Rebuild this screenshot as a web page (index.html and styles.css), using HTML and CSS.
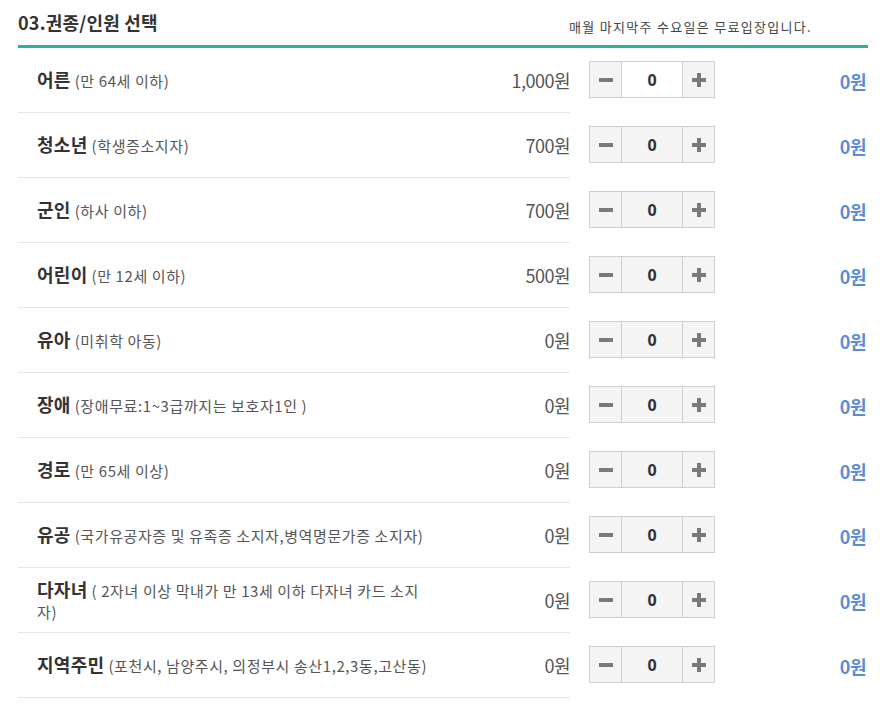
FILE: index.html
```html
<!DOCTYPE html>
<html>
<head>
    <meta charset="UTF-8">
    <title>권종/인원 선택</title>
    <link rel="stylesheet" href="styles.css">
</head>
<body>
    <div class="ticket">
        <div class="ticket-head">
            <h3 class="ticket-title">03.권종/인원 선택</h3>
            <span class="ticket-note">매월 마지막주 수요일은 무료입장입니다.</span>
        </div>
        <ul class="ticket-list">
            <li class="ticket-row">
                <div class="ticket-info">
                    <div class="ticket-name"><strong>어른</strong> <span>(만 64세 이하)</span></div>
                    <div class="ticket-price">1,000원</div>
                </div>
                <div class="stepper">
                    <button class="step minus"></button>
                    <input class="step-num focus" type="text" value="0">
                    <button class="step plus"></button>
                </div>
                <div class="ticket-sum">0원</div>
            </li>
            <li class="ticket-row">
                <div class="ticket-info">
                    <div class="ticket-name"><strong>청소년</strong> <span>(학생증소지자)</span></div>
                    <div class="ticket-price">700원</div>
                </div>
                <div class="stepper">
                    <button class="step minus"></button>
                    <input class="step-num" type="text" value="0">
                    <button class="step plus"></button>
                </div>
                <div class="ticket-sum">0원</div>
            </li>
            <li class="ticket-row">
                <div class="ticket-info">
                    <div class="ticket-name"><strong>군인</strong> <span>(하사 이하)</span></div>
                    <div class="ticket-price">700원</div>
                </div>
                <div class="stepper">
                    <button class="step minus"></button>
                    <input class="step-num" type="text" value="0">
                    <button class="step plus"></button>
                </div>
                <div class="ticket-sum">0원</div>
            </li>
            <li class="ticket-row">
                <div class="ticket-info">
                    <div class="ticket-name"><strong>어린이</strong> <span>(만 12세 이하)</span></div>
                    <div class="ticket-price">500원</div>
                </div>
                <div class="stepper">
                    <button class="step minus"></button>
                    <input class="step-num" type="text" value="0">
                    <button class="step plus"></button>
                </div>
                <div class="ticket-sum">0원</div>
            </li>
            <li class="ticket-row">
                <div class="ticket-info">
                    <div class="ticket-name"><strong>유아</strong> <span>(미취학 아동)</span></div>
                    <div class="ticket-price">0원</div>
                </div>
                <div class="stepper">
                    <button class="step minus"></button>
                    <input class="step-num" type="text" value="0">
                    <button class="step plus"></button>
                </div>
                <div class="ticket-sum">0원</div>
            </li>
            <li class="ticket-row">
                <div class="ticket-info">
                    <div class="ticket-name"><strong>장애</strong> <span>(장애무료:1~3급까지는 보호자1인 )</span></div>
                    <div class="ticket-price">0원</div>
                </div>
                <div class="stepper">
                    <button class="step minus"></button>
                    <input class="step-num" type="text" value="0">
                    <button class="step plus"></button>
                </div>
                <div class="ticket-sum">0원</div>
            </li>
            <li class="ticket-row">
                <div class="ticket-info">
                    <div class="ticket-name"><strong>경로</strong> <span>(만 65세 이상)</span></div>
                    <div class="ticket-price">0원</div>
                </div>
                <div class="stepper">
                    <button class="step minus"></button>
                    <input class="step-num" type="text" value="0">
                    <button class="step plus"></button>
                </div>
                <div class="ticket-sum">0원</div>
            </li>
            <li class="ticket-row">
                <div class="ticket-info">
                    <div class="ticket-name"><strong>유공</strong> <span>(국가유공자증 및 유족증 소지자,병역명문가증 소지자)</span></div>
                    <div class="ticket-price">0원</div>
                </div>
                <div class="stepper">
                    <button class="step minus"></button>
                    <input class="step-num" type="text" value="0">
                    <button class="step plus"></button>
                </div>
                <div class="ticket-sum">0원</div>
            </li>
            <li class="ticket-row">
                <div class="ticket-info">
                    <div class="ticket-name"><strong>다자녀</strong> <span>( 2자녀 이상 막내가 만 13세 이하 다자녀 카드 소지자)</span></div>
                    <div class="ticket-price">0원</div>
                </div>
                <div class="stepper">
                    <button class="step minus"></button>
                    <input class="step-num" type="text" value="0">
                    <button class="step plus"></button>
                </div>
                <div class="ticket-sum">0원</div>
            </li>
            <li class="ticket-row">
                <div class="ticket-info">
                    <div class="ticket-name"><strong>지역주민</strong> <span>(포천시, 남양주시, 의정부시 송산1,2,3동,고산동)</span></div>
                    <div class="ticket-price">0원</div>
                </div>
                <div class="stepper">
                    <button class="step minus"></button>
                    <input class="step-num" type="text" value="0">
                    <button class="step plus"></button>
                </div>
                <div class="ticket-sum">0원</div>
            </li>
        </ul>
    </div>
</body>
</html>
```

FILE: styles.css
```css
body {
    margin: 0;
    padding: 0;
    background: #fff;
    color: #333;
    font-family: "Noto Sans CJK KR", "Noto Sans", sans-serif;
}
.ticket {
    width: 850px;
    margin-left: 18px;
}
.ticket-head {
    display: flex;
    align-items: flex-start;
    justify-content: space-between;
    height: 45px;
    border-bottom: 3px solid #2ab39b;
}
.ticket-title {
    margin: 10px 0 0;
    font-size: 18px;
    font-weight: 700;
    color: #333;
    line-height: 24px;
    letter-spacing: 0.2px;
}
.ticket-note {
    margin: 18px 56px 0 0;
    font-size: 13px;
    color: #444;
    line-height: 18px;
    letter-spacing: 1.3px;
}
.ticket-list {
    list-style: none;
    margin: 0;
    padding: 0;
}
.ticket-row {
    display: flex;
    align-items: center;
    height: 65px;
}
.ticket-info {
    display: flex;
    align-items: center;
    width: 552px;
    height: 65px;
    box-sizing: border-box;
    border-bottom: 1px solid #e6e6e6;
    padding-left: 19px;
}
.ticket-name {
    width: 400px;
    font-size: 15px;
    color: #555;
    line-height: 21px;
    letter-spacing: 0.6px;
}
.ticket-name strong {
    font-size: 18px;
    font-weight: 700;
    color: #333;
    letter-spacing: 0.3px;
}
.ticket-price {
    flex: 1;
    text-align: right;
    font-size: 18px;
    color: #555;
    letter-spacing: -0.5px;
}
.stepper {
    display: flex;
    align-self: flex-start;
    height: 37px;
    margin: 13px 0 0 19px;
    border: 1px solid #cfcfcf;
    box-sizing: border-box;
}
.step {
    position: relative;
    width: 31px;
    height: 35px;
    padding: 0;
    border: 0;
    background: #f4f4f4;
}
.step::before,
.step::after {
    content: "";
    position: absolute;
    left: 50%;
    top: 50%;
    background: #7a7a7a;
}
.step::before {
    width: 14px;
    height: 4px;
    margin: -2px 0 0 -7px;
}
.plus::after {
    width: 4px;
    height: 14px;
    margin: -7px 0 0 -2px;
}
.minus::after {
    display: none;
}
.step-num {
    width: 62px;
    height: 35px;
    padding: 0;
    border: 0;
    border-left: 1px solid #cfcfcf;
    border-right: 1px solid #cfcfcf;
    background: #f4f4f4;
    box-sizing: border-box;
    text-align: center;
    font-family: "Noto Sans", sans-serif;
    font-size: 16px;
    font-weight: 700;
    color: #333;
}
.step-num.focus {
    background: #fff;
}
.ticket-sum {
    flex: 1;
    text-align: right;
    padding-right: 2px;
    font-size: 18px;
    font-weight: 700;
    color: #5b8dd6;
    letter-spacing: -0.5px;
}
```
